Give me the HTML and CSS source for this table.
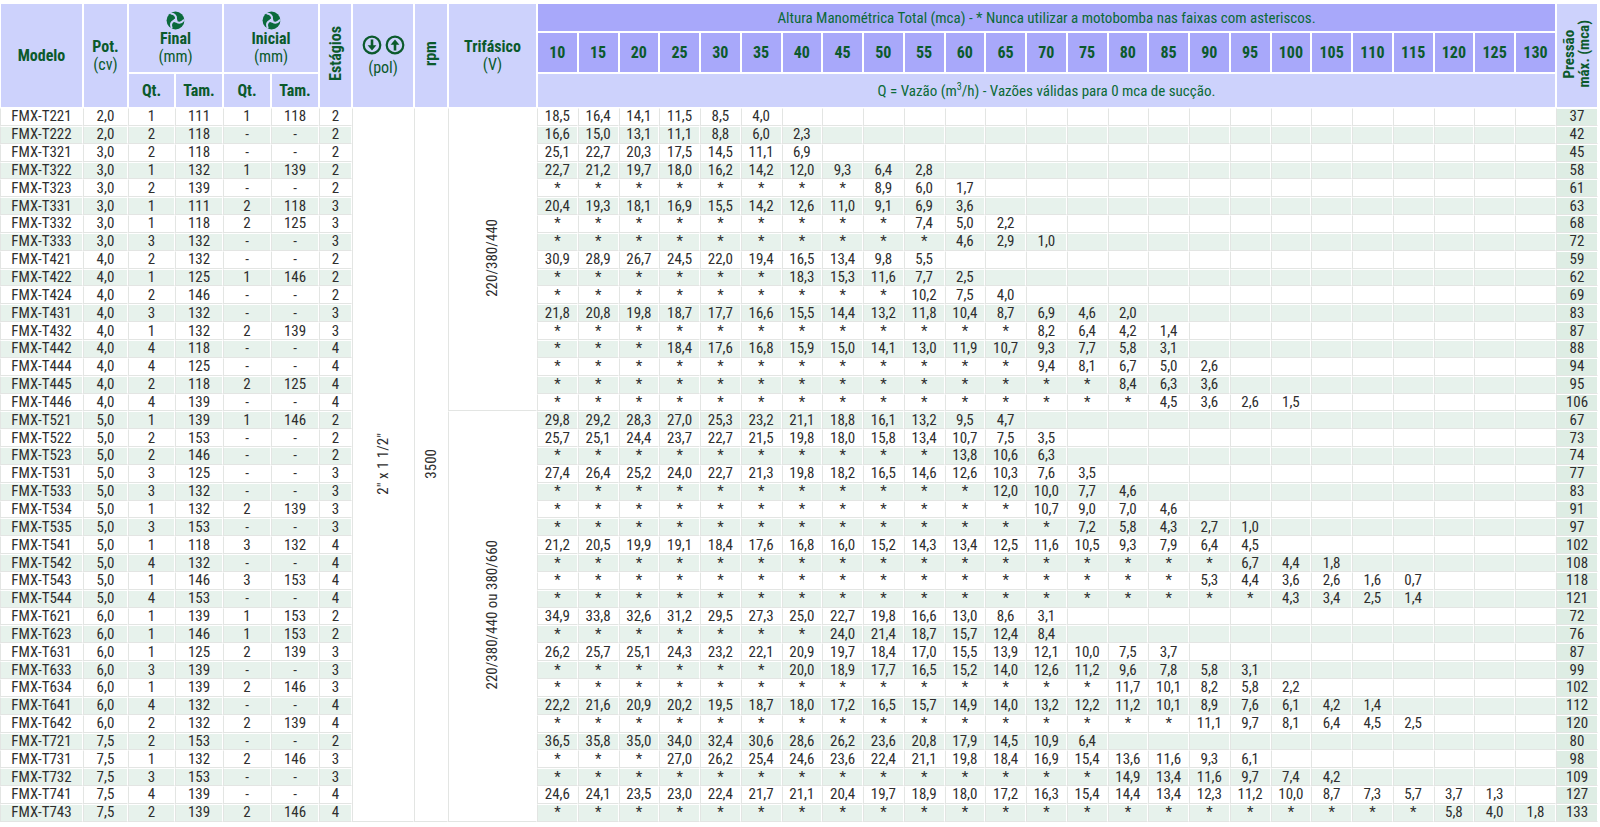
FILE: index.html
```html
<!DOCTYPE html>
<html lang="pt-BR">
<head>
<meta charset="utf-8">
<title>Tabela FMX-T</title>
<link rel="stylesheet" href="styles.css">
</head>
<body>
<svg width="0" height="0" class="defs" aria-hidden="true">
  <defs>
    <g id="fan">
      <circle cx="10" cy="10" r="9.4" class="fan-disc"/>
      <g class="fan-gap">
        <path id="gap" d="M10.6 8.4 C 10.8 5.6 9.2 3.2 5.4 2.6"/>
        <use href="#gap" transform="rotate(120 10 10)"/>
        <use href="#gap" transform="rotate(240 10 10)"/>
      </g>
      <circle cx="10" cy="10" r="2.1" class="fan-hub"/>
    </g>
  </defs>
</svg>
<table class="tbl">
  <colgroup>
    <col class="c-mod"><col class="c-pot"><col class="c-q"><col class="c-t"><col class="c-t"><col class="c-t"><col class="c-est"><col class="c-pol"><col class="c-rpm"><col class="c-tri">
    <col><col><col><col><col><col><col><col><col><col><col><col><col><col><col><col><col><col><col><col><col><col><col><col><col>
    <col class="c-pm">
  </colgroup>
  <thead>
    <tr class="ha">
      <th rowspan="3">Modelo</th>
      <th rowspan="3">Pot.<br><span class="reg">(cv)</span></th>
      <th colspan="2" rowspan="2" class="icohead"><svg class="fan" viewBox="0 0 20 20"><use href="#fan"/></svg><br>Final<br><span class="reg">(mm)</span></th>
      <th colspan="2" rowspan="2" class="icohead"><svg class="fan" viewBox="0 0 20 20"><use href="#fan"/></svg><br>Inicial<br><span class="reg">(mm)</span></th>
      <th rowspan="3"><span class="vert">Estágios</span></th>
      <th rowspan="3" class="polh">
        <span class="arrows">
          <svg viewBox="0 0 20 20" class="arr"><circle cx="10" cy="10" r="8.3"/><path class="shaft" d="M10 4.5 V 13"/><path class="head" d="M5.6 10.2 L10 15.4 L14.4 10.2 Z"/></svg>
          <svg viewBox="0 0 20 20" class="arr"><circle cx="10" cy="10" r="8.3"/><path class="shaft" d="M10 15.5 V 7"/><path class="head" d="M5.6 9.8 L10 4.6 L14.4 9.8 Z"/></svg>
        </span><br><span class="reg">(pol)</span></th>
      <th rowspan="3"><span class="vert">rpm</span></th>
      <th rowspan="3">Trifásico<br><span class="reg">(V)</span></th>
      <th colspan="25" class="dark reg title">Altura Manométrica Total (mca) - * Nunca utilizar a motobomba nas faixas com asteriscos.</th>
      <th rowspan="3"><span class="vert pm-h">Pressão<br>máx. (mca)</span></th>
    </tr>
    <tr class="hb">
      <th class="dark">10</th><th class="dark">15</th><th class="dark">20</th><th class="dark">25</th><th class="dark">30</th><th class="dark">35</th><th class="dark">40</th><th class="dark">45</th><th class="dark">50</th><th class="dark">55</th><th class="dark">60</th><th class="dark">65</th><th class="dark">70</th><th class="dark">75</th><th class="dark">80</th><th class="dark">85</th><th class="dark">90</th><th class="dark">95</th><th class="dark">100</th><th class="dark">105</th><th class="dark">110</th><th class="dark">115</th><th class="dark">120</th><th class="dark">125</th><th class="dark">130</th>
    </tr>
    <tr class="hc">
      <th>Qt.</th><th>Tam.</th><th>Qt.</th><th>Tam.</th>
      <th colspan="25" class="reg title">Q = Vazão (m<sup>3</sup>/h) - Vazões válidas para 0 mca de sucção.</th>
    </tr>
  </thead>
  <tbody>
<tr><td>FMX-T221</td><td>2,0</td><td>1</td><td>111</td><td>1</td><td>118</td><td>2</td><td rowspan="40" class="span"><span class="vert">2" x 1 1/2"</span></td><td rowspan="40" class="span"><span class="vert">3500</span></td><td rowspan="17" class="span"><span class="vert">220/380/440</span></td><td>18,5</td><td>16,4</td><td>14,1</td><td>11,5</td><td>8,5</td><td>4,0</td><td></td><td></td><td></td><td></td><td></td><td></td><td></td><td></td><td></td><td></td><td></td><td></td><td></td><td></td><td></td><td></td><td></td><td></td><td></td><td class="pm">37</td></tr>
<tr class="alt"><td>FMX-T222</td><td>2,0</td><td>2</td><td>118</td><td>-</td><td>-</td><td>2</td><td>16,6</td><td>15,0</td><td>13,1</td><td>11,1</td><td>8,8</td><td>6,0</td><td>2,3</td><td></td><td></td><td></td><td></td><td></td><td></td><td></td><td></td><td></td><td></td><td></td><td></td><td></td><td></td><td></td><td></td><td></td><td></td><td class="pm">42</td></tr>
<tr><td>FMX-T321</td><td>3,0</td><td>2</td><td>118</td><td>-</td><td>-</td><td>2</td><td>25,1</td><td>22,7</td><td>20,3</td><td>17,5</td><td>14,5</td><td>11,1</td><td>6,9</td><td></td><td></td><td></td><td></td><td></td><td></td><td></td><td></td><td></td><td></td><td></td><td></td><td></td><td></td><td></td><td></td><td></td><td></td><td class="pm">45</td></tr>
<tr class="alt"><td>FMX-T322</td><td>3,0</td><td>1</td><td>132</td><td>1</td><td>139</td><td>2</td><td>22,7</td><td>21,2</td><td>19,7</td><td>18,0</td><td>16,2</td><td>14,2</td><td>12,0</td><td>9,3</td><td>6,4</td><td>2,8</td><td></td><td></td><td></td><td></td><td></td><td></td><td></td><td></td><td></td><td></td><td></td><td></td><td></td><td></td><td></td><td class="pm">58</td></tr>
<tr><td>FMX-T323</td><td>3,0</td><td>2</td><td>139</td><td>-</td><td>-</td><td>2</td><td>*</td><td>*</td><td>*</td><td>*</td><td>*</td><td>*</td><td>*</td><td>*</td><td>8,9</td><td>6,0</td><td>1,7</td><td></td><td></td><td></td><td></td><td></td><td></td><td></td><td></td><td></td><td></td><td></td><td></td><td></td><td></td><td class="pm">61</td></tr>
<tr class="alt"><td>FMX-T331</td><td>3,0</td><td>1</td><td>111</td><td>2</td><td>118</td><td>3</td><td>20,4</td><td>19,3</td><td>18,1</td><td>16,9</td><td>15,5</td><td>14,2</td><td>12,6</td><td>11,0</td><td>9,1</td><td>6,9</td><td>3,6</td><td></td><td></td><td></td><td></td><td></td><td></td><td></td><td></td><td></td><td></td><td></td><td></td><td></td><td></td><td class="pm">63</td></tr>
<tr><td>FMX-T332</td><td>3,0</td><td>1</td><td>118</td><td>2</td><td>125</td><td>3</td><td>*</td><td>*</td><td>*</td><td>*</td><td>*</td><td>*</td><td>*</td><td>*</td><td>*</td><td>7,4</td><td>5,0</td><td>2,2</td><td></td><td></td><td></td><td></td><td></td><td></td><td></td><td></td><td></td><td></td><td></td><td></td><td></td><td class="pm">68</td></tr>
<tr class="alt"><td>FMX-T333</td><td>3,0</td><td>3</td><td>132</td><td>-</td><td>-</td><td>3</td><td>*</td><td>*</td><td>*</td><td>*</td><td>*</td><td>*</td><td>*</td><td>*</td><td>*</td><td>*</td><td>4,6</td><td>2,9</td><td>1,0</td><td></td><td></td><td></td><td></td><td></td><td></td><td></td><td></td><td></td><td></td><td></td><td></td><td class="pm">72</td></tr>
<tr><td>FMX-T421</td><td>4,0</td><td>2</td><td>132</td><td>-</td><td>-</td><td>2</td><td>30,9</td><td>28,9</td><td>26,7</td><td>24,5</td><td>22,0</td><td>19,4</td><td>16,5</td><td>13,4</td><td>9,8</td><td>5,5</td><td></td><td></td><td></td><td></td><td></td><td></td><td></td><td></td><td></td><td></td><td></td><td></td><td></td><td></td><td></td><td class="pm">59</td></tr>
<tr class="alt"><td>FMX-T422</td><td>4,0</td><td>1</td><td>125</td><td>1</td><td>146</td><td>2</td><td>*</td><td>*</td><td>*</td><td>*</td><td>*</td><td>*</td><td>18,3</td><td>15,3</td><td>11,6</td><td>7,7</td><td>2,5</td><td></td><td></td><td></td><td></td><td></td><td></td><td></td><td></td><td></td><td></td><td></td><td></td><td></td><td></td><td class="pm">62</td></tr>
<tr><td>FMX-T424</td><td>4,0</td><td>2</td><td>146</td><td>-</td><td>-</td><td>2</td><td>*</td><td>*</td><td>*</td><td>*</td><td>*</td><td>*</td><td>*</td><td>*</td><td>*</td><td>10,2</td><td>7,5</td><td>4,0</td><td></td><td></td><td></td><td></td><td></td><td></td><td></td><td></td><td></td><td></td><td></td><td></td><td></td><td class="pm">69</td></tr>
<tr class="alt"><td>FMX-T431</td><td>4,0</td><td>3</td><td>132</td><td>-</td><td>-</td><td>3</td><td>21,8</td><td>20,8</td><td>19,8</td><td>18,7</td><td>17,7</td><td>16,6</td><td>15,5</td><td>14,4</td><td>13,2</td><td>11,8</td><td>10,4</td><td>8,7</td><td>6,9</td><td>4,6</td><td>2,0</td><td></td><td></td><td></td><td></td><td></td><td></td><td></td><td></td><td></td><td></td><td class="pm">83</td></tr>
<tr><td>FMX-T432</td><td>4,0</td><td>1</td><td>132</td><td>2</td><td>139</td><td>3</td><td>*</td><td>*</td><td>*</td><td>*</td><td>*</td><td>*</td><td>*</td><td>*</td><td>*</td><td>*</td><td>*</td><td>*</td><td>8,2</td><td>6,4</td><td>4,2</td><td>1,4</td><td></td><td></td><td></td><td></td><td></td><td></td><td></td><td></td><td></td><td class="pm">87</td></tr>
<tr class="alt"><td>FMX-T442</td><td>4,0</td><td>4</td><td>118</td><td>-</td><td>-</td><td>4</td><td>*</td><td>*</td><td>*</td><td>18,4</td><td>17,6</td><td>16,8</td><td>15,9</td><td>15,0</td><td>14,1</td><td>13,0</td><td>11,9</td><td>10,7</td><td>9,3</td><td>7,7</td><td>5,8</td><td>3,1</td><td></td><td></td><td></td><td></td><td></td><td></td><td></td><td></td><td></td><td class="pm">88</td></tr>
<tr><td>FMX-T444</td><td>4,0</td><td>4</td><td>125</td><td>-</td><td>-</td><td>4</td><td>*</td><td>*</td><td>*</td><td>*</td><td>*</td><td>*</td><td>*</td><td>*</td><td>*</td><td>*</td><td>*</td><td>*</td><td>9,4</td><td>8,1</td><td>6,7</td><td>5,0</td><td>2,6</td><td></td><td></td><td></td><td></td><td></td><td></td><td></td><td></td><td class="pm">94</td></tr>
<tr class="alt"><td>FMX-T445</td><td>4,0</td><td>2</td><td>118</td><td>2</td><td>125</td><td>4</td><td>*</td><td>*</td><td>*</td><td>*</td><td>*</td><td>*</td><td>*</td><td>*</td><td>*</td><td>*</td><td>*</td><td>*</td><td>*</td><td>*</td><td>8,4</td><td>6,3</td><td>3,6</td><td></td><td></td><td></td><td></td><td></td><td></td><td></td><td></td><td class="pm">95</td></tr>
<tr><td>FMX-T446</td><td>4,0</td><td>4</td><td>139</td><td>-</td><td>-</td><td>4</td><td>*</td><td>*</td><td>*</td><td>*</td><td>*</td><td>*</td><td>*</td><td>*</td><td>*</td><td>*</td><td>*</td><td>*</td><td>*</td><td>*</td><td>*</td><td>4,5</td><td>3,6</td><td>2,6</td><td>1,5</td><td></td><td></td><td></td><td></td><td></td><td></td><td class="pm">106</td></tr>
<tr class="alt"><td>FMX-T521</td><td>5,0</td><td>1</td><td>139</td><td>1</td><td>146</td><td>2</td><td rowspan="23" class="span"><span class="vert">220/380/440 ou 380/660</span></td><td>29,8</td><td>29,2</td><td>28,3</td><td>27,0</td><td>25,3</td><td>23,2</td><td>21,1</td><td>18,8</td><td>16,1</td><td>13,2</td><td>9,5</td><td>4,7</td><td></td><td></td><td></td><td></td><td></td><td></td><td></td><td></td><td></td><td></td><td></td><td></td><td></td><td class="pm">67</td></tr>
<tr><td>FMX-T522</td><td>5,0</td><td>2</td><td>153</td><td>-</td><td>-</td><td>2</td><td>25,7</td><td>25,1</td><td>24,4</td><td>23,7</td><td>22,7</td><td>21,5</td><td>19,8</td><td>18,0</td><td>15,8</td><td>13,4</td><td>10,7</td><td>7,5</td><td>3,5</td><td></td><td></td><td></td><td></td><td></td><td></td><td></td><td></td><td></td><td></td><td></td><td></td><td class="pm">73</td></tr>
<tr class="alt"><td>FMX-T523</td><td>5,0</td><td>2</td><td>146</td><td>-</td><td>-</td><td>2</td><td>*</td><td>*</td><td>*</td><td>*</td><td>*</td><td>*</td><td>*</td><td>*</td><td>*</td><td>*</td><td>13,8</td><td>10,6</td><td>6,3</td><td></td><td></td><td></td><td></td><td></td><td></td><td></td><td></td><td></td><td></td><td></td><td></td><td class="pm">74</td></tr>
<tr><td>FMX-T531</td><td>5,0</td><td>3</td><td>125</td><td>-</td><td>-</td><td>3</td><td>27,4</td><td>26,4</td><td>25,2</td><td>24,0</td><td>22,7</td><td>21,3</td><td>19,8</td><td>18,2</td><td>16,5</td><td>14,6</td><td>12,6</td><td>10,3</td><td>7,6</td><td>3,5</td><td></td><td></td><td></td><td></td><td></td><td></td><td></td><td></td><td></td><td></td><td></td><td class="pm">77</td></tr>
<tr class="alt"><td>FMX-T533</td><td>5,0</td><td>3</td><td>132</td><td>-</td><td>-</td><td>3</td><td>*</td><td>*</td><td>*</td><td>*</td><td>*</td><td>*</td><td>*</td><td>*</td><td>*</td><td>*</td><td>*</td><td>12,0</td><td>10,0</td><td>7,7</td><td>4,6</td><td></td><td></td><td></td><td></td><td></td><td></td><td></td><td></td><td></td><td></td><td class="pm">83</td></tr>
<tr><td>FMX-T534</td><td>5,0</td><td>1</td><td>132</td><td>2</td><td>139</td><td>3</td><td>*</td><td>*</td><td>*</td><td>*</td><td>*</td><td>*</td><td>*</td><td>*</td><td>*</td><td>*</td><td>*</td><td>*</td><td>10,7</td><td>9,0</td><td>7,0</td><td>4,6</td><td></td><td></td><td></td><td></td><td></td><td></td><td></td><td></td><td></td><td class="pm">91</td></tr>
<tr class="alt"><td>FMX-T535</td><td>5,0</td><td>3</td><td>153</td><td>-</td><td>-</td><td>3</td><td>*</td><td>*</td><td>*</td><td>*</td><td>*</td><td>*</td><td>*</td><td>*</td><td>*</td><td>*</td><td>*</td><td>*</td><td>*</td><td>7,2</td><td>5,8</td><td>4,3</td><td>2,7</td><td>1,0</td><td></td><td></td><td></td><td></td><td></td><td></td><td></td><td class="pm">97</td></tr>
<tr><td>FMX-T541</td><td>5,0</td><td>1</td><td>118</td><td>3</td><td>132</td><td>4</td><td>21,2</td><td>20,5</td><td>19,9</td><td>19,1</td><td>18,4</td><td>17,6</td><td>16,8</td><td>16,0</td><td>15,2</td><td>14,3</td><td>13,4</td><td>12,5</td><td>11,6</td><td>10,5</td><td>9,3</td><td>7,9</td><td>6,4</td><td>4,5</td><td></td><td></td><td></td><td></td><td></td><td></td><td></td><td class="pm">102</td></tr>
<tr class="alt"><td>FMX-T542</td><td>5,0</td><td>4</td><td>132</td><td>-</td><td>-</td><td>4</td><td>*</td><td>*</td><td>*</td><td>*</td><td>*</td><td>*</td><td>*</td><td>*</td><td>*</td><td>*</td><td>*</td><td>*</td><td>*</td><td>*</td><td>*</td><td>*</td><td>*</td><td>6,7</td><td>4,4</td><td>1,8</td><td></td><td></td><td></td><td></td><td></td><td class="pm">108</td></tr>
<tr><td>FMX-T543</td><td>5,0</td><td>1</td><td>146</td><td>3</td><td>153</td><td>4</td><td>*</td><td>*</td><td>*</td><td>*</td><td>*</td><td>*</td><td>*</td><td>*</td><td>*</td><td>*</td><td>*</td><td>*</td><td>*</td><td>*</td><td>*</td><td>*</td><td>5,3</td><td>4,4</td><td>3,6</td><td>2,6</td><td>1,6</td><td>0,7</td><td></td><td></td><td></td><td class="pm">118</td></tr>
<tr class="alt"><td>FMX-T544</td><td>5,0</td><td>4</td><td>153</td><td>-</td><td>-</td><td>4</td><td>*</td><td>*</td><td>*</td><td>*</td><td>*</td><td>*</td><td>*</td><td>*</td><td>*</td><td>*</td><td>*</td><td>*</td><td>*</td><td>*</td><td>*</td><td>*</td><td>*</td><td>*</td><td>4,3</td><td>3,4</td><td>2,5</td><td>1,4</td><td></td><td></td><td></td><td class="pm">121</td></tr>
<tr><td>FMX-T621</td><td>6,0</td><td>1</td><td>139</td><td>1</td><td>153</td><td>2</td><td>34,9</td><td>33,8</td><td>32,6</td><td>31,2</td><td>29,5</td><td>27,3</td><td>25,0</td><td>22,7</td><td>19,8</td><td>16,6</td><td>13,0</td><td>8,6</td><td>3,1</td><td></td><td></td><td></td><td></td><td></td><td></td><td></td><td></td><td></td><td></td><td></td><td></td><td class="pm">72</td></tr>
<tr class="alt"><td>FMX-T623</td><td>6,0</td><td>1</td><td>146</td><td>1</td><td>153</td><td>2</td><td>*</td><td>*</td><td>*</td><td>*</td><td>*</td><td>*</td><td>*</td><td>24,0</td><td>21,4</td><td>18,7</td><td>15,7</td><td>12,4</td><td>8,4</td><td></td><td></td><td></td><td></td><td></td><td></td><td></td><td></td><td></td><td></td><td></td><td></td><td class="pm">76</td></tr>
<tr><td>FMX-T631</td><td>6,0</td><td>1</td><td>125</td><td>2</td><td>139</td><td>3</td><td>26,2</td><td>25,7</td><td>25,1</td><td>24,3</td><td>23,2</td><td>22,1</td><td>20,9</td><td>19,7</td><td>18,4</td><td>17,0</td><td>15,5</td><td>13,9</td><td>12,1</td><td>10,0</td><td>7,5</td><td>3,7</td><td></td><td></td><td></td><td></td><td></td><td></td><td></td><td></td><td></td><td class="pm">87</td></tr>
<tr class="alt"><td>FMX-T633</td><td>6,0</td><td>3</td><td>139</td><td>-</td><td>-</td><td>3</td><td>*</td><td>*</td><td>*</td><td>*</td><td>*</td><td>*</td><td>20,0</td><td>18,9</td><td>17,7</td><td>16,5</td><td>15,2</td><td>14,0</td><td>12,6</td><td>11,2</td><td>9,6</td><td>7,8</td><td>5,8</td><td>3,1</td><td></td><td></td><td></td><td></td><td></td><td></td><td></td><td class="pm">99</td></tr>
<tr><td>FMX-T634</td><td>6,0</td><td>1</td><td>139</td><td>2</td><td>146</td><td>3</td><td>*</td><td>*</td><td>*</td><td>*</td><td>*</td><td>*</td><td>*</td><td>*</td><td>*</td><td>*</td><td>*</td><td>*</td><td>*</td><td>*</td><td>11,7</td><td>10,1</td><td>8,2</td><td>5,8</td><td>2,2</td><td></td><td></td><td></td><td></td><td></td><td></td><td class="pm">102</td></tr>
<tr class="alt"><td>FMX-T641</td><td>6,0</td><td>4</td><td>132</td><td>-</td><td>-</td><td>4</td><td>22,2</td><td>21,6</td><td>20,9</td><td>20,2</td><td>19,5</td><td>18,7</td><td>18,0</td><td>17,2</td><td>16,5</td><td>15,7</td><td>14,9</td><td>14,0</td><td>13,2</td><td>12,2</td><td>11,2</td><td>10,1</td><td>8,9</td><td>7,6</td><td>6,1</td><td>4,2</td><td>1,4</td><td></td><td></td><td></td><td></td><td class="pm">112</td></tr>
<tr><td>FMX-T642</td><td>6,0</td><td>2</td><td>132</td><td>2</td><td>139</td><td>4</td><td>*</td><td>*</td><td>*</td><td>*</td><td>*</td><td>*</td><td>*</td><td>*</td><td>*</td><td>*</td><td>*</td><td>*</td><td>*</td><td>*</td><td>*</td><td>*</td><td>11,1</td><td>9,7</td><td>8,1</td><td>6,4</td><td>4,5</td><td>2,5</td><td></td><td></td><td></td><td class="pm">120</td></tr>
<tr class="alt"><td>FMX-T721</td><td>7,5</td><td>2</td><td>153</td><td>-</td><td>-</td><td>2</td><td>36,5</td><td>35,8</td><td>35,0</td><td>34,0</td><td>32,4</td><td>30,6</td><td>28,6</td><td>26,2</td><td>23,6</td><td>20,8</td><td>17,9</td><td>14,5</td><td>10,9</td><td>6,4</td><td></td><td></td><td></td><td></td><td></td><td></td><td></td><td></td><td></td><td></td><td></td><td class="pm">80</td></tr>
<tr><td>FMX-T731</td><td>7,5</td><td>1</td><td>132</td><td>2</td><td>146</td><td>3</td><td>*</td><td>*</td><td>*</td><td>27,0</td><td>26,2</td><td>25,4</td><td>24,6</td><td>23,6</td><td>22,4</td><td>21,1</td><td>19,8</td><td>18,4</td><td>16,9</td><td>15,4</td><td>13,6</td><td>11,6</td><td>9,3</td><td>6,1</td><td></td><td></td><td></td><td></td><td></td><td></td><td></td><td class="pm">98</td></tr>
<tr class="alt"><td>FMX-T732</td><td>7,5</td><td>3</td><td>153</td><td>-</td><td>-</td><td>3</td><td>*</td><td>*</td><td>*</td><td>*</td><td>*</td><td>*</td><td>*</td><td>*</td><td>*</td><td>*</td><td>*</td><td>*</td><td>*</td><td>*</td><td>14,9</td><td>13,4</td><td>11,6</td><td>9,7</td><td>7,4</td><td>4,2</td><td></td><td></td><td></td><td></td><td></td><td class="pm">109</td></tr>
<tr><td>FMX-T741</td><td>7,5</td><td>4</td><td>139</td><td>-</td><td>-</td><td>4</td><td>24,6</td><td>24,1</td><td>23,5</td><td>23,0</td><td>22,4</td><td>21,7</td><td>21,1</td><td>20,4</td><td>19,7</td><td>18,9</td><td>18,0</td><td>17,2</td><td>16,3</td><td>15,4</td><td>14,4</td><td>13,4</td><td>12,3</td><td>11,2</td><td>10,0</td><td>8,7</td><td>7,3</td><td>5,7</td><td>3,7</td><td>1,3</td><td></td><td class="pm">127</td></tr>
<tr class="alt"><td>FMX-T743</td><td>7,5</td><td>2</td><td>139</td><td>2</td><td>146</td><td>4</td><td>*</td><td>*</td><td>*</td><td>*</td><td>*</td><td>*</td><td>*</td><td>*</td><td>*</td><td>*</td><td>*</td><td>*</td><td>*</td><td>*</td><td>*</td><td>*</td><td>*</td><td>*</td><td>*</td><td>*</td><td>*</td><td>*</td><td>5,8</td><td>4,0</td><td>1,8</td><td class="pm">133</td></tr>
  </tbody>
</table>
</body>
</html>
```

FILE: styles.css
```css
html, body {
  margin: 0;
  padding: 0;
  background: #fff;
}

body {
  font-family: "Liberation Sans Narrow", "Arial Narrow", "Roboto Condensed", "DejaVu Sans Condensed", "Liberation Sans", sans-serif;
  color: #333;
}

.defs {
  position: absolute;
  width: 0;
  height: 0;
  overflow: hidden;
}

.tbl {
  border-collapse: separate;
  border-spacing: 0;
  table-layout: fixed;
  width: 1598px;
  margin-top: 3px;
}

.c-mod { width: 83px; }
.c-pot { width: 45px; }
.c-q { width: 47px; }
.c-t { width: 48px; }
.c-est { width: 33px; }
.c-pol { width: 62px; }
.c-rpm { width: 34px; }
.c-tri { width: 89px; }
.c-pm { width: 42px; }

/* header */
.tbl th {
  background: #cdd2fc;
  color: #0b5a2c;
  border: 1px solid #fff;
  padding: 0;
  font-weight: bold;
  font-size: 16px;
  line-height: 18px;
  text-align: center;
  vertical-align: middle;
}

.tbl th.dark {
  background: #a8a8fa;
}

.tbl .reg {
  font-weight: normal;
}

.tbl th.title {
  font-size: 15px;
  color: #0b6a36;
}

.tbl th sup {
  font-size: 10px;
  line-height: 0;
}

.ha { height: 29px; }
.hb { height: 41px; }
.hc { height: 35px; }

.icohead {
  line-height: 17px;
}

.fan {
  width: 19px;
  height: 19px;
  vertical-align: top;
}

.fan-disc {
  fill: #0b6a3c;
}

.fan-gap {
  fill: none;
  stroke: #cdd2fc;
  stroke-width: 2.1;
  stroke-linecap: round;
}

.fan-hub {
  fill: #cdd2fc;
}

.arrows {
  display: inline-flex;
  gap: 3px;
  margin-bottom: 2px;
}

.arr {
  width: 20px;
  height: 20px;
}

.arr circle {
  fill: none;
  stroke: #0b5a2c;
  stroke-width: 2.2;
}

.arr .shaft {
  stroke: #0b5a2c;
  stroke-width: 2.6;
  fill: none;
}

.arr .head {
  fill: #0b5a2c;
}

.vert {
  display: inline-block;
  writing-mode: vertical-rl;
  transform: rotate(180deg);
  white-space: nowrap;
}

.pm-h {
  line-height: 15px;
  font-size: 15px;
}

/* body */
.tbl tbody tr {
  height: 17.85px;
}

.tbl td {
  padding: 0;
  font-size: 15px;
  line-height: 15px;
  text-align: center;
  vertical-align: middle;
  color: #2e2e2e;
  border-style: solid;
  border-width: 1px;
  border-color: #fff #fff #e3e5e3 #e3e5e3;
  white-space: nowrap;
  overflow: hidden;
}

.tbl tr.alt td {
  background: #e7f2ec;
}

.tbl td.span,
.tbl tr.alt td.span {
  background: #fff;
  font-size: 15px;
  overflow: visible;
}

.tbl td.pm,
.tbl tr.alt td.pm {
  background: #deede4;
}
```
